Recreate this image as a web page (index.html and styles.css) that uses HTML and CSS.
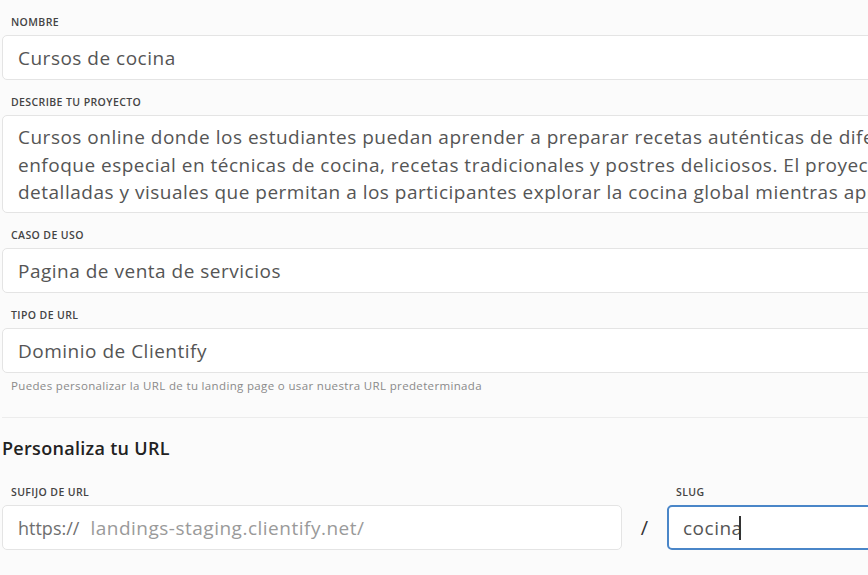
FILE: index.html
```html
<!DOCTYPE html>
<html lang="es">
<head>
<meta charset="utf-8">
<title>Landing</title>
<link rel="stylesheet" href="styles.css">
</head>
<body>
<div class="page">
  <div class="field">
    <div class="label">NOMBRE</div>
    <div class="input">Cursos de cocina</div>
  </div>
  <div class="field">
    <div class="label">DESCRIBE TU PROYECTO</div>
    <div class="textarea">
      <span class="line">Cursos online donde los estudiantes puedan aprender a preparar recetas auténticas de diferentes países, con un</span>
      <span class="line">enfoque especial en técnicas de cocina, recetas tradicionales y postres deliciosos. El proyecto incluirá guías</span>
      <span class="line">detalladas y visuales que permitan a los participantes explorar la cocina global mientras aprenden.</span>
    </div>
  </div>
  <div class="field">
    <div class="label">CASO DE USO</div>
    <div class="input">Pagina de venta de servicios</div>
  </div>
  <div class="field last">
    <div class="label">TIPO DE URL</div>
    <div class="input">Dominio de Clientify</div>
    <div class="help">Puedes personalizar la URL de tu landing page o usar nuestra URL predeterminada</div>
  </div>
  <hr class="sep">
  <h2 class="heading">Personaliza tu URL</h2>
  <div class="url-row">
    <div class="field">
      <div class="label">SUFIJO DE URL</div>
      <div class="input"><span class="proto">https://</span><span class="domain">landings-staging.clientify.net/</span></div>
    </div>
    <div class="slash">/</div>
    <div class="field">
      <div class="label">SLUG</div>
      <div class="input focus">cocina<span class="caret"></span></div>
    </div>
  </div>
</div>
</body>
</html>
```
FILE: styles.css
```css
html, body {
  margin: 0;
  padding: 0;
  background: #fbfbfb;
  overflow: hidden;
}
.page {
  width: 1040px;
  padding: 15px 0 0 2px;
  font-family: "Open Sans", "Liberation Sans", sans-serif;
  color: #555;
}
.field {
  display: flex;
  flex-direction: column;
  margin-bottom: 15px;
}
.field.last { margin-bottom: 0; }
.label {
  font-size: 10.5px;
  line-height: 14px;
  font-weight: 600;
  color: #444;
  padding-left: 9px;
  margin-bottom: 6px;
  letter-spacing: 0.4px;
}
.input, .textarea {
  box-sizing: border-box;
  background: #fff;
  border: 1px solid #e4e4e4;
  border-radius: 5px;
  padding: 0 15px;
  font-size: 19px;
  letter-spacing: 0.5px;
  color: #555;
  white-space: nowrap;
  overflow: hidden;
}
.input {
  height: 45px;
  display: flex;
  align-items: center;
}
.textarea {
  height: 98px;
  padding-top: 8px;
  line-height: 27.5px;
}
.line { display: block; }
.help {
  font-size: 11.5px;
  line-height: 14px;
  letter-spacing: 0.35px;
  color: #8a8a8a;
  padding-left: 9px;
  margin-top: 6px;
}
.sep {
  border: 0;
  border-top: 1px solid #ececec;
  margin: 24px 0 0 0;
  height: 0;
}
.heading {
  margin: 18px 0 0 0;
  font-size: 18px;
  line-height: 24px;
  letter-spacing: 0.3px;
  font-weight: 600;
  color: #222;
}
.url-row {
  display: grid;
  grid-template-columns: 620px 45px 1fr;
  margin-top: 25px;
}
.url-row .field { margin-bottom: 0; }
.proto {
  color: #6f6f6f;
  font-size: 18px;
  letter-spacing: 0;
  margin-right: 11px;
}
.domain { color: #9a9a9a; }
.slash {
  align-self: end;
  height: 45px;
  display: flex;
  align-items: center;
  justify-content: center;
  font-size: 20px;
  color: #333;
}
.input.focus {
  border: 2px solid #4a86c8;
  padding-left: 14px;
}
.caret {
  display: inline-block;
  width: 2px;
  height: 24px;
  background: #333;
  margin-left: -4px;
}
```
